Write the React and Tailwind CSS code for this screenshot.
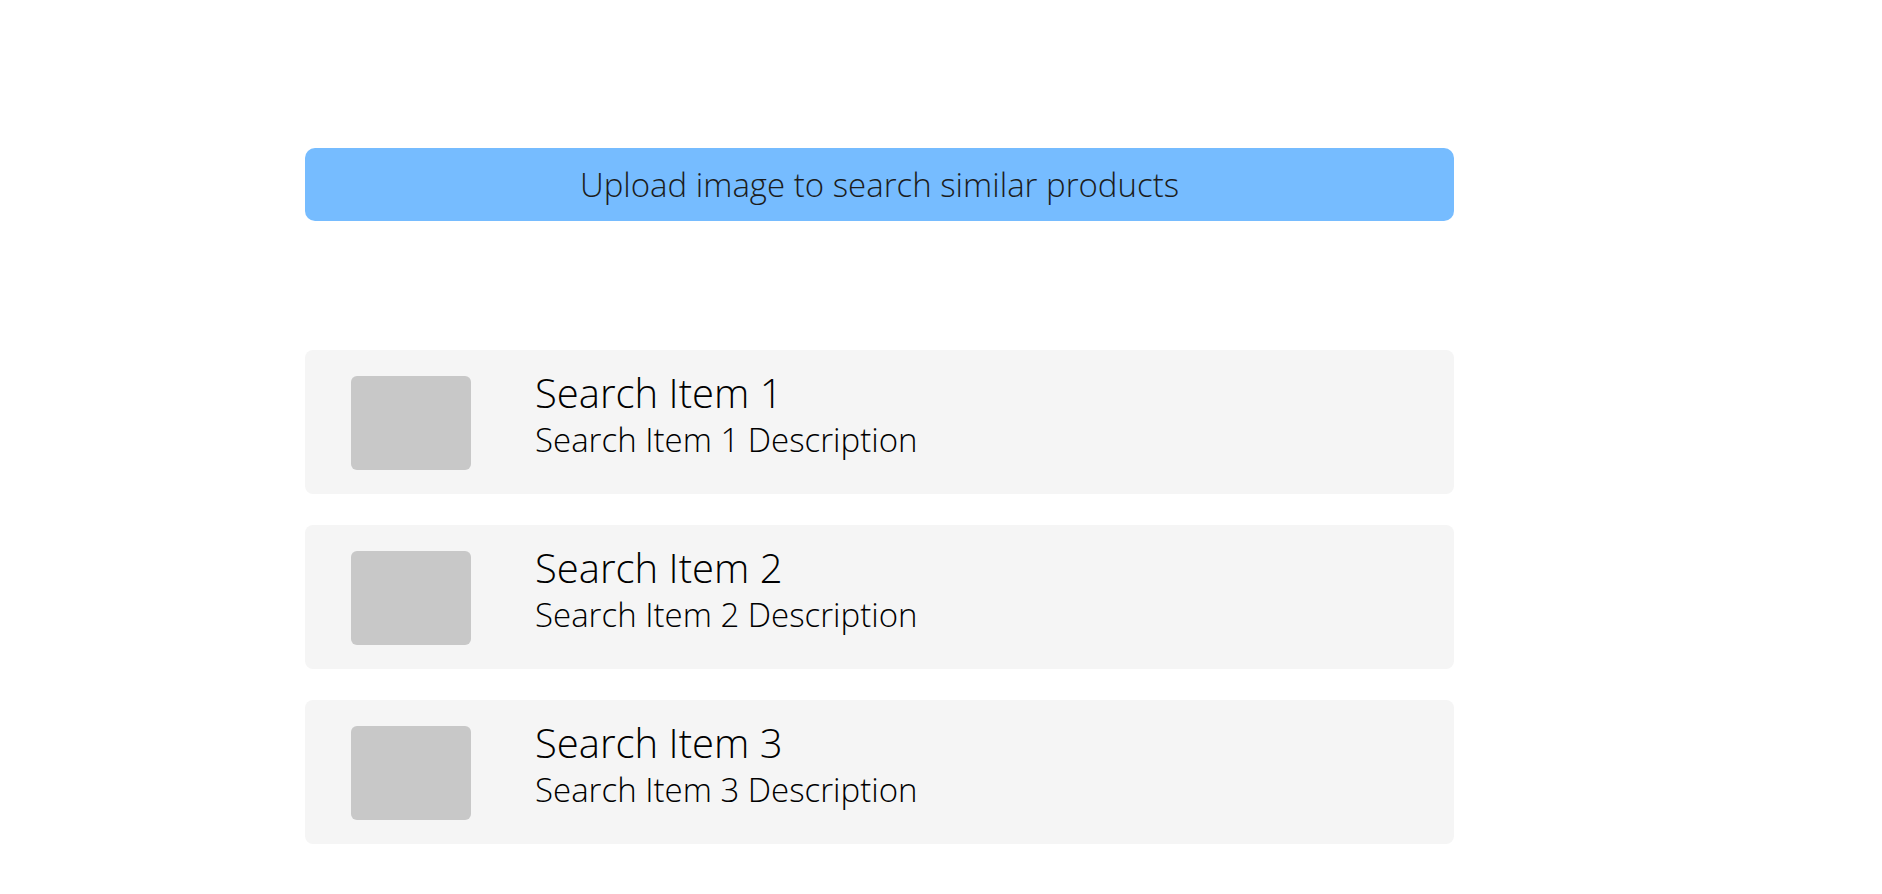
import React from "react";

const items = [
  { id: 1, title: "Search Item 1", description: "Search Item 1 Description" },
  { id: 2, title: "Search Item 2", description: "Search Item 2 Description" },
  { id: 3, title: "Search Item 3", description: "Search Item 3 Description" },
];

const SearchItem = ({ title, description }) => {
  return (
    <div className="flex h-[144px] items-start rounded-lg bg-[#f5f5f5] pl-[46px] pt-[26px]">
      <div className="h-[94px] w-[120px] shrink-0 rounded-md bg-[#c8c8c8]" />
      <div className="ml-[64px] -mt-[5px] flex flex-col">
        <span className="text-[40px] leading-[44px] font-light text-black">
          {title}
        </span>
        <span className="text-[33px] leading-[49px] font-light text-black">
          {description}
        </span>
      </div>
    </div>
  );
};

const App = () => {
  return (
    <div
      className="min-h-screen w-full bg-white"
      style={{ fontFamily: "'Open Sans', 'Noto Sans', sans-serif" }}
    >
      <div className="ml-[305px] w-[1149px] pt-[148px]">
        <button className="flex h-[73px] w-full items-center justify-center rounded-[10px] bg-[#76bcff] text-[33px] font-light text-[#1c1c1c]">
          Upload image to search similar products
        </button>

        <div className="mt-[129px] flex flex-col gap-[31px]">
          {items.map((item) => (
            <SearchItem
              key={item.id}
              title={item.title}
              description={item.description}
            />
          ))}
        </div>
      </div>
    </div>
  );
};

export default App;
